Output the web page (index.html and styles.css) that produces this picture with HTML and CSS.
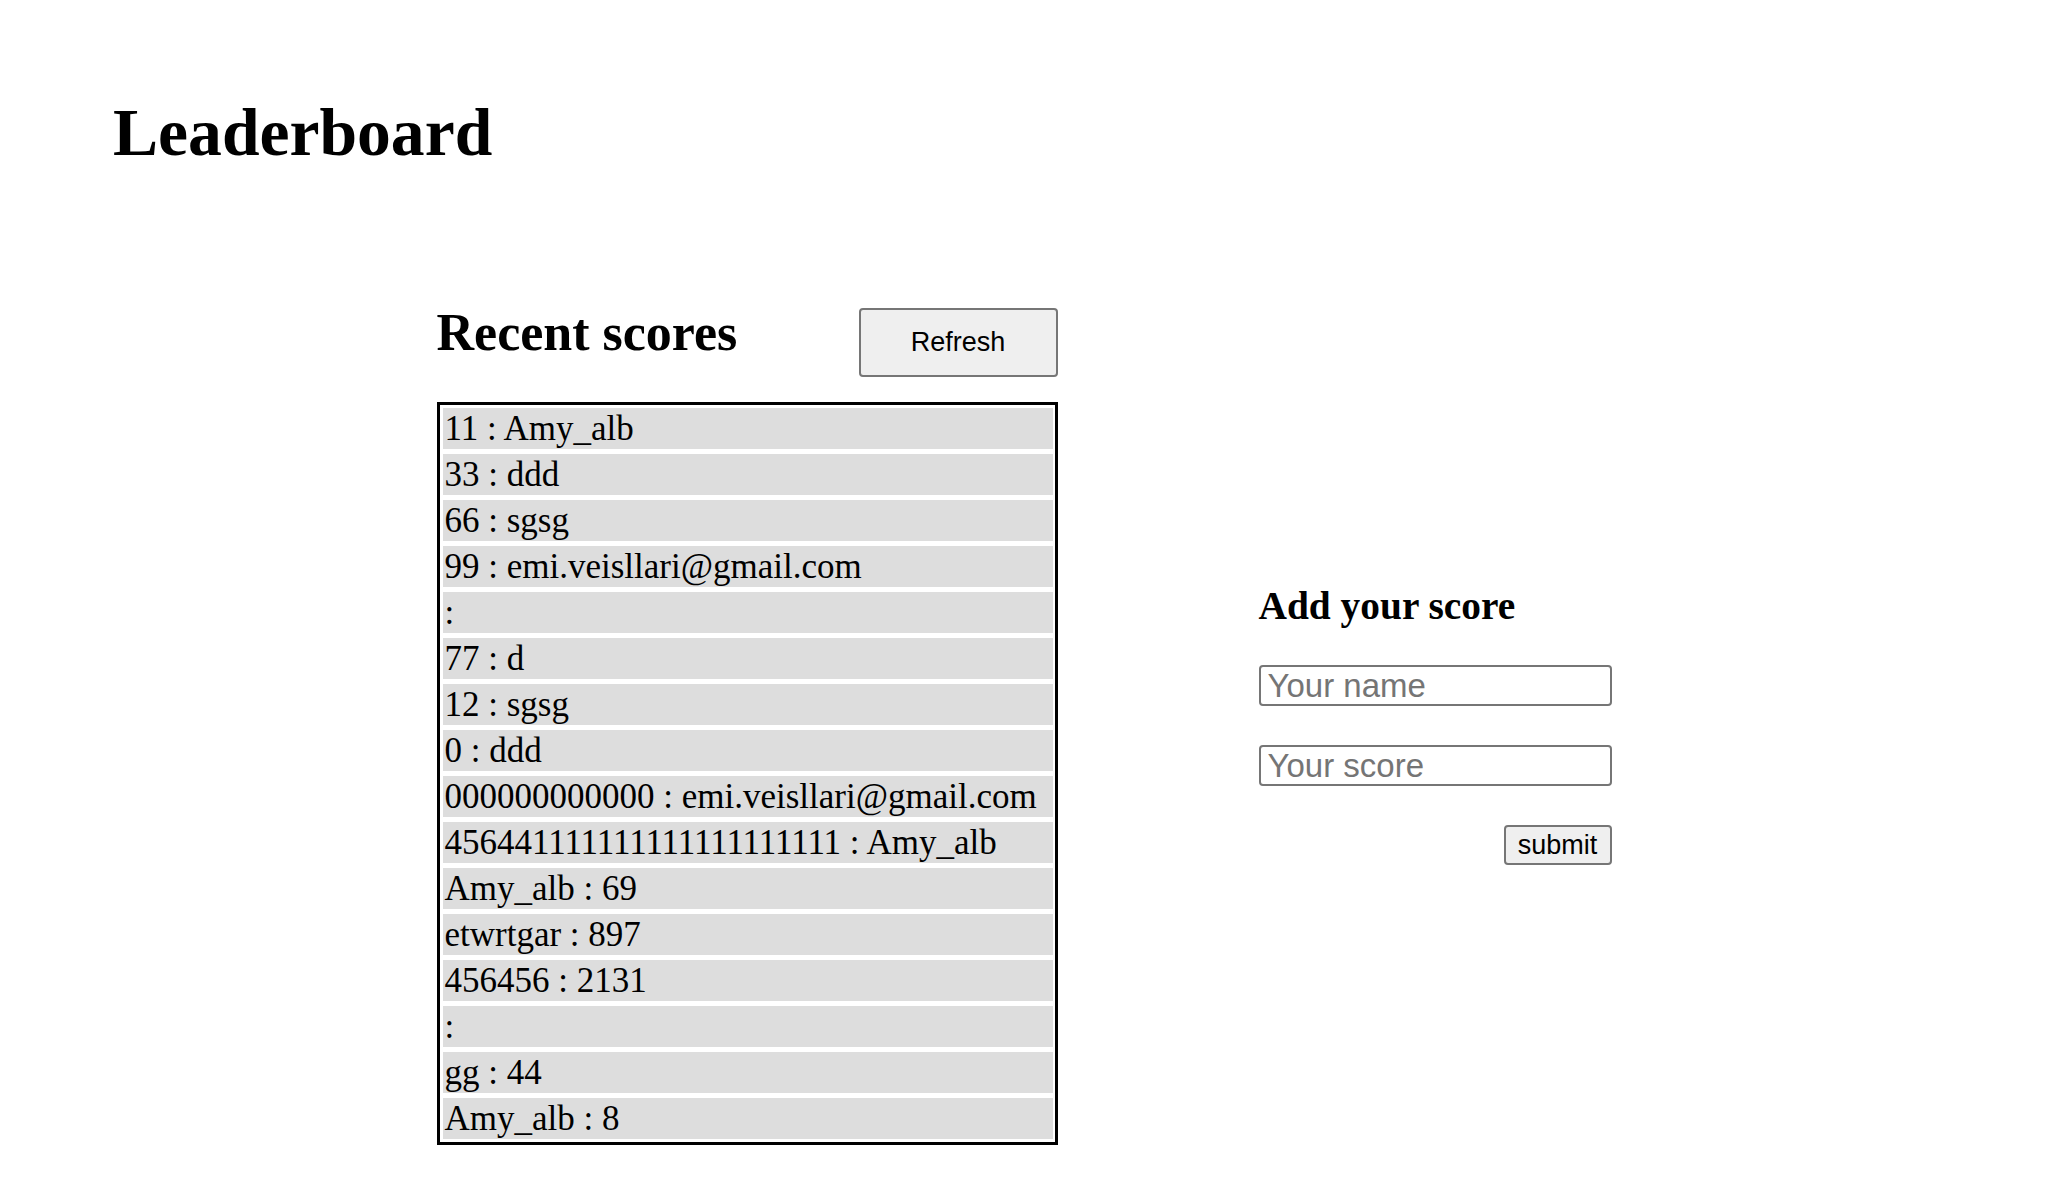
FILE: index.html
```html
<!DOCTYPE html>
<html lang="en">
<head>
<meta charset="utf-8">
<title>Leaderboard</title>
<link rel="stylesheet" href="styles.css">
</head>
<body>
  <header class="page-header">
    <h1 class="page-title">Leaderboard</h1>
  </header>
  <main class="board">
    <section class="recent">
      <div class="recent-head">
        <h2 class="recent-title">Recent scores</h2>
        <button class="refresh-btn" type="button">Refresh</button>
      </div>
      <ul class="score-list">
        <li class="score-row">11 : Amy_alb</li>
        <li class="score-row">33 : ddd</li>
        <li class="score-row">66 : sgsg</li>
        <li class="score-row">99 : emi.veisllari@gmail.com</li>
        <li class="score-row">:</li>
        <li class="score-row">77 : d</li>
        <li class="score-row">12 : sgsg</li>
        <li class="score-row">0 : ddd</li>
        <li class="score-row">000000000000 : emi.veisllari@gmail.com</li>
        <li class="score-row">456441111111111111111111 : Amy_alb</li>
        <li class="score-row">Amy_alb : 69</li>
        <li class="score-row">etwrtgar : 897</li>
        <li class="score-row">456456 : 2131</li>
        <li class="score-row">:</li>
        <li class="score-row">gg : 44</li>
        <li class="score-row">Amy_alb : 8</li>
      </ul>
    </section>
    <section class="add-score">
      <h2 class="add-title">Add your score</h2>
      <form class="score-form">
        <input class="field" type="text" placeholder="Your name">
        <input class="field" type="text" placeholder="Your score">
        <div class="form-actions">
          <button class="submit-btn" type="submit">submit</button>
        </div>
      </form>
    </section>
  </main>
</body>
</html>
```

FILE: styles.css
```css
html, body {
  margin: 0;
  padding: 0;
  background: #ffffff;
  color: #000000;
  font-family: "Liberation Serif", "Times New Roman", serif;
}

.page-header {
  padding: 93px 0 0 113px;
}

.page-title {
  margin: 0;
  font-size: 67.6px;
  line-height: 80px;
  font-weight: 700;
}

.board {
  margin-top: 135px;
  display: flex;
  justify-content: center;
  align-items: center;
  gap: 201px;
}

.recent {
  width: 621px;
  display: flex;
  flex-direction: column;
}

.recent-head {
  display: flex;
  justify-content: space-between;
  align-items: flex-start;
}

.recent-title {
  margin: 0;
  font-size: 52px;
  line-height: 50px;
  font-weight: 700;
}

.refresh-btn {
  width: 199px;
  height: 69px;
  background: #efefef;
  border: 2px solid #767676;
  border-radius: 4px;
  font-family: "Liberation Sans", Arial, sans-serif;
  font-size: 27px;
  color: #000000;
  padding: 0;
}

.score-list {
  list-style: none;
  margin: 25px 0 0 0;
  padding: 3px 2px 3px 3px;
  border: 3px solid #000000;
  display: flex;
  flex-direction: column;
  gap: 5px;
}

.score-row {
  height: 41px;
  line-height: 41px;
  background: #dddddd;
  padding-left: 2px;
  font-size: 35px;
  white-space: nowrap;
  overflow: hidden;
}

.add-score {
  width: 353px;
  display: flex;
  flex-direction: column;
}

.add-title {
  margin: 0;
  font-size: 39.4px;
  line-height: 36px;
  font-weight: 700;
}

.score-form {
  margin-top: 41px;
  display: flex;
  flex-direction: column;
  gap: 39px;
}

.field {
  box-sizing: border-box;
  width: 353px;
  height: 41px;
  margin: 0;
  padding: 0 7px;
  border: 2px solid #767676;
  border-radius: 4px;
  font-family: "Liberation Sans", Arial, sans-serif;
  font-size: 33px;
  color: #000000;
  background: #ffffff;
}

.field::placeholder {
  color: #757575;
}

.form-actions {
  display: flex;
  justify-content: flex-end;
}

.submit-btn {
  box-sizing: border-box;
  width: 108px;
  height: 40px;
  padding: 0;
  background: #efefef;
  border: 2px solid #767676;
  border-radius: 4px;
  font-family: "Liberation Sans", Arial, sans-serif;
  font-size: 27px;
  color: #000000;
}
```
